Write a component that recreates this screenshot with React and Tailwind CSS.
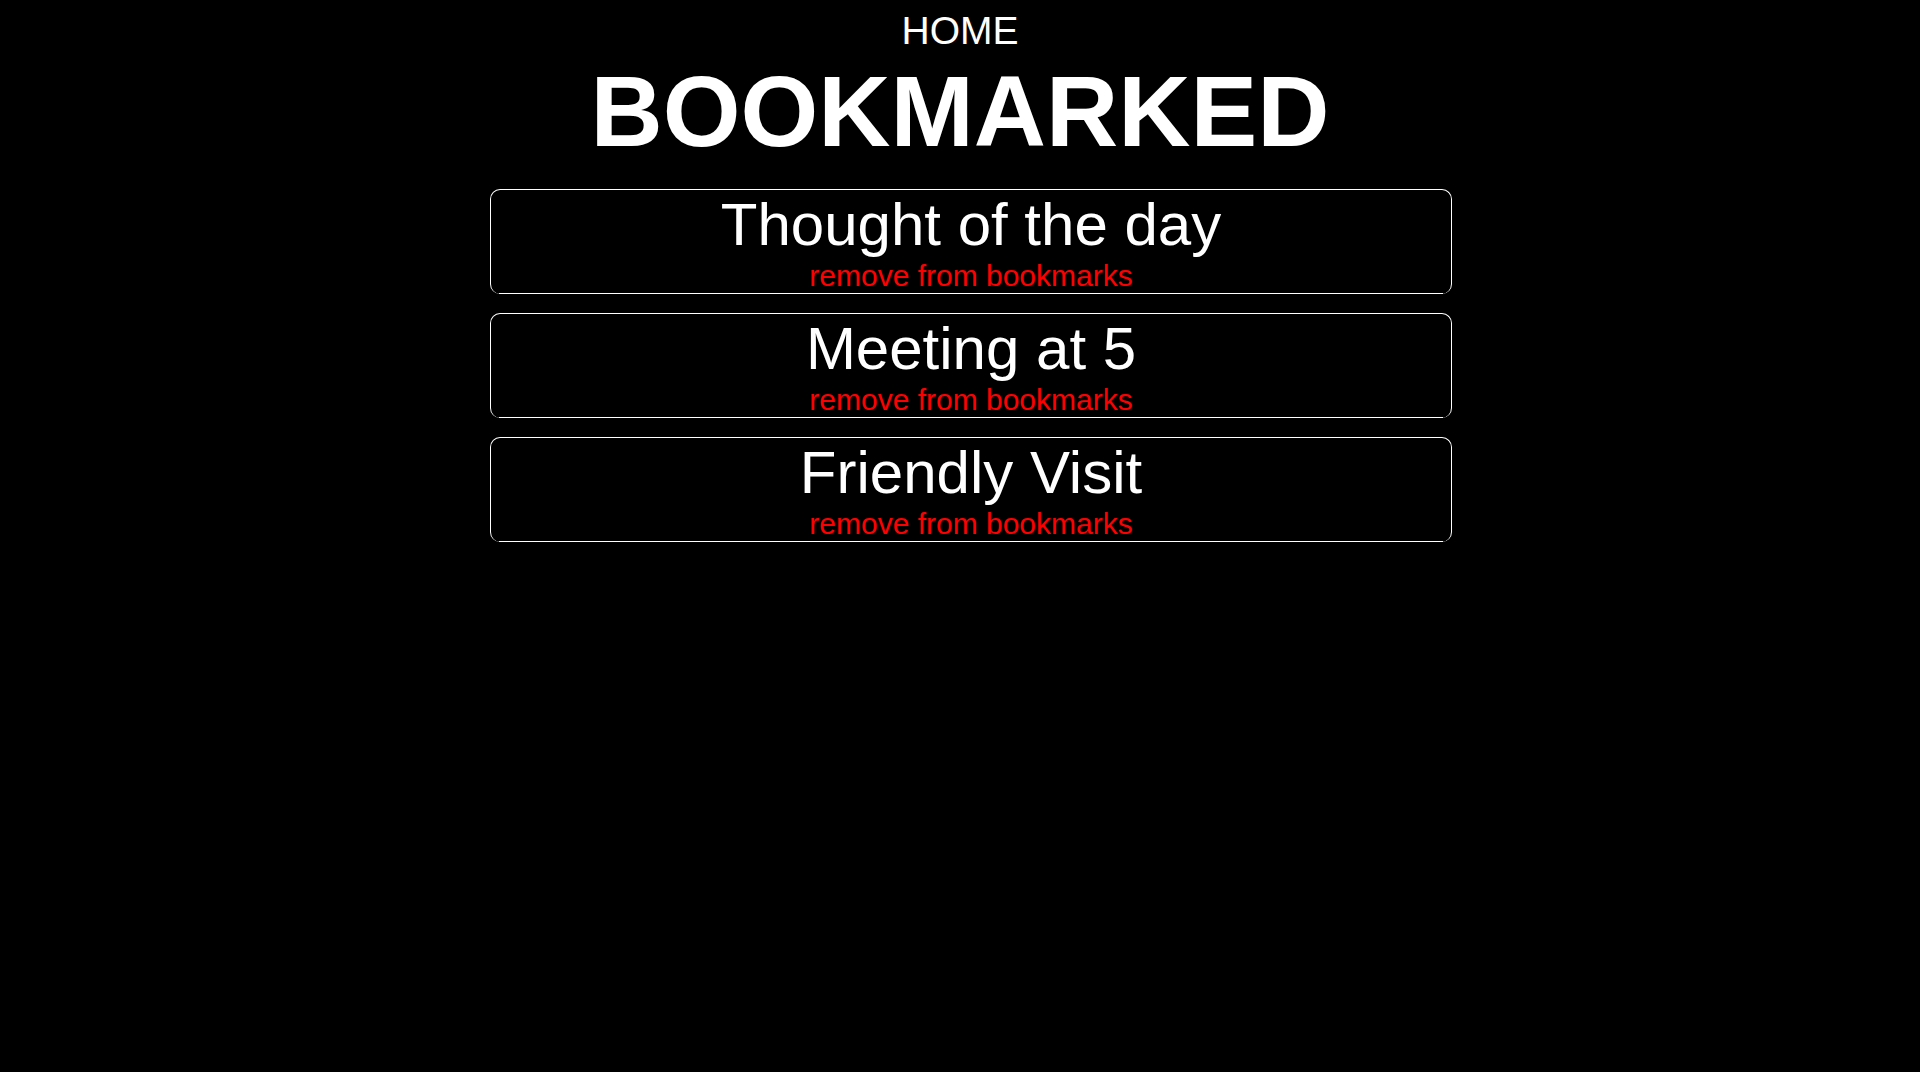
import React from "react";

const bookmarks = ["Thought of the day", "Meeting at 5", "Friendly Visit"];

const BookmarkCard = ({ title }) => {
    return (
        <div className="rounded-[10px] border border-b-0 border-white">
            <div className="mx-2 border-b border-white text-center">
                <div className="text-[60px] leading-[normal] text-white">{title}</div>
                <div className="text-[30px] leading-[normal] text-[#ff0000] cursor-pointer">
                    remove from bookmarks
                </div>
            </div>
        </div>
    );
};

const App = () => {
    return (
        <div className="min-h-screen bg-black text-white font-['Liberation_Sans',Arial,sans-serif]">
            {/* Judul */}
            <div className="pt-[9px] text-center">
                <div className="text-[39px] leading-[normal]">HOME</div>
                <h1 className="mt-px text-[100px] font-bold leading-[normal]">BOOKMARKED</h1>
            </div>

            {/* Daftar bookmark */}
            <div className="mx-auto mt-[20px] flex w-[984px] flex-col gap-[19px] pl-[22px]">
                {bookmarks.map((title) => (
                    <BookmarkCard key={title} title={title} />
                ))}
            </div>
        </div>
    );
};

export default App;
